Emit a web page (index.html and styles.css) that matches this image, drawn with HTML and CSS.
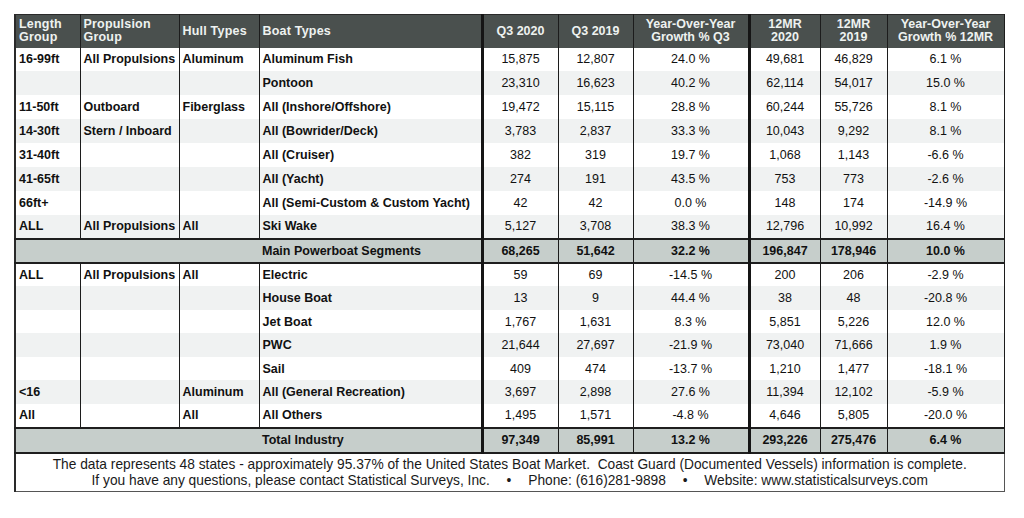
FILE: index.html
```html
<!DOCTYPE html>
<html>
<head>
<meta charset="utf-8">
<link rel="stylesheet" href="styles.css">
</head>
<body>
<div class="page">
<table class="sales">
  <colgroup>
    <col class="c-len"><col class="c-prop"><col class="c-hull"><col class="c-boat">
    <col class="c-q20"><col class="c-q19"><col class="c-gq">
    <col class="c-m20"><col class="c-m19"><col class="c-gm">
  </colgroup>
  <thead>
    <tr>
      <th class="txt">Length<br>Group</th>
      <th class="txt">Propulsion<br>Group</th>
      <th class="txt">Hull Types</th>
      <th class="txt sep">Boat Types</th>
      <th>Q3 2020</th>
      <th>Q3 2019</th>
      <th class="sep">Year-Over-Year<br>Growth % Q3</th>
      <th>12MR<br>2020</th>
      <th>12MR<br>2019</th>
      <th>Year-Over-Year<br>Growth % 12MR</th>
    </tr>
  </thead>
  <tbody class="power">
    <tr><td class="txt">16-99ft</td><td class="txt">All Propulsions</td><td class="txt">Aluminum</td><td class="txt sep">Aluminum Fish</td><td>15,875</td><td>12,807</td><td class="sep">24.0 %</td><td>49,681</td><td>46,829</td><td>6.1 %</td></tr>
    <tr class="alt"><td class="txt"></td><td class="txt"></td><td class="txt"></td><td class="txt sep">Pontoon</td><td>23,310</td><td>16,623</td><td class="sep">40.2 %</td><td>62,114</td><td>54,017</td><td>15.0 %</td></tr>
    <tr><td class="txt">11-50ft</td><td class="txt">Outboard</td><td class="txt">Fiberglass</td><td class="txt sep">All (Inshore/Offshore)</td><td>19,472</td><td>15,115</td><td class="sep">28.8 %</td><td>60,244</td><td>55,726</td><td>8.1 %</td></tr>
    <tr class="alt"><td class="txt">14-30ft</td><td class="txt">Stern / Inboard</td><td class="txt"></td><td class="txt sep">All (Bowrider/Deck)</td><td>3,783</td><td>2,837</td><td class="sep">33.3 %</td><td>10,043</td><td>9,292</td><td>8.1 %</td></tr>
    <tr><td class="txt">31-40ft</td><td class="txt"></td><td class="txt"></td><td class="txt sep">All (Cruiser)</td><td>382</td><td>319</td><td class="sep">19.7 %</td><td>1,068</td><td>1,143</td><td>-6.6 %</td></tr>
    <tr class="alt"><td class="txt">41-65ft</td><td class="txt"></td><td class="txt"></td><td class="txt sep">All (Yacht)</td><td>274</td><td>191</td><td class="sep">43.5 %</td><td>753</td><td>773</td><td>-2.6 %</td></tr>
    <tr><td class="txt">66ft+</td><td class="txt"></td><td class="txt"></td><td class="txt sep">All (Semi-Custom &amp; Custom Yacht)</td><td>42</td><td>42</td><td class="sep">0.0 %</td><td>148</td><td>174</td><td>-14.9 %</td></tr>
    <tr class="alt"><td class="txt">ALL</td><td class="txt">All Propulsions</td><td class="txt">All</td><td class="txt sep">Ski Wake</td><td>5,127</td><td>3,708</td><td class="sep">38.3 %</td><td>12,796</td><td>10,992</td><td>16.4 %</td></tr>
    <tr class="sum"><td class="txt blank"></td><td class="txt blank"></td><td class="txt blank"></td><td class="txt sep">Main Powerboat Segments</td><td>68,265</td><td>51,642</td><td class="sep">32.2 %</td><td>196,847</td><td>178,946</td><td>10.0 %</td></tr>
  </tbody>
  <tbody class="other">
    <tr><td class="txt">ALL</td><td class="txt">All Propulsions</td><td class="txt">All</td><td class="txt sep">Electric</td><td>59</td><td>69</td><td class="sep">-14.5 %</td><td>200</td><td>206</td><td>-2.9 %</td></tr>
    <tr class="alt"><td class="txt"></td><td class="txt"></td><td class="txt"></td><td class="txt sep">House Boat</td><td>13</td><td>9</td><td class="sep">44.4 %</td><td>38</td><td>48</td><td>-20.8 %</td></tr>
    <tr><td class="txt"></td><td class="txt"></td><td class="txt"></td><td class="txt sep">Jet Boat</td><td>1,767</td><td>1,631</td><td class="sep">8.3 %</td><td>5,851</td><td>5,226</td><td>12.0 %</td></tr>
    <tr class="alt"><td class="txt"></td><td class="txt"></td><td class="txt"></td><td class="txt sep">PWC</td><td>21,644</td><td>27,697</td><td class="sep">-21.9 %</td><td>73,040</td><td>71,666</td><td>1.9 %</td></tr>
    <tr><td class="txt"></td><td class="txt"></td><td class="txt"></td><td class="txt sep">Sail</td><td>409</td><td>474</td><td class="sep">-13.7 %</td><td>1,210</td><td>1,477</td><td>-18.1 %</td></tr>
    <tr class="alt"><td class="txt">&lt;16</td><td class="txt"></td><td class="txt">Aluminum</td><td class="txt sep">All (General Recreation)</td><td>3,697</td><td>2,898</td><td class="sep">27.6 %</td><td>11,394</td><td>12,102</td><td>-5.9 %</td></tr>
    <tr><td class="txt">All</td><td class="txt"></td><td class="txt">All</td><td class="txt sep">All Others</td><td>1,495</td><td>1,571</td><td class="sep">-4.8 %</td><td>4,646</td><td>5,805</td><td>-20.0 %</td></tr>
    <tr class="sum total"><td class="txt blank"></td><td class="txt blank"></td><td class="txt blank"></td><td class="txt sep">Total Industry</td><td>97,349</td><td>85,991</td><td class="sep">13.2 %</td><td>293,226</td><td>275,476</td><td>6.4 %</td></tr>
  </tbody>
  <tfoot>
    <tr>
      <td colspan="10" class="note">The data represents 48 states - approximately 95.37% of the United States Boat Market.&nbsp; Coast Guard (Documented Vessels) information is complete.<br>If you have any questions, please contact Statistical Surveys, Inc. <span class="dot">•</span> Phone: (616)281-9898 <span class="dot">•</span> Website: www.statisticalsurveys.com</td>
    </tr>
  </tfoot>
</table>
</div>
</body>
</html>
```

FILE: styles.css
```css
html, body {
  margin: 0;
  padding: 0;
  background: #ffffff;
}

.page {
  padding: 14px 0 0 14px;
}

.sales {
  width: 989px;
  table-layout: fixed;
  border-collapse: collapse;
  font-family: "Liberation Sans", Arial, sans-serif;
  color: #111111;
  border-left: 2px solid #2a2a2a;
  border-right: 1px solid #555;
}

.c-len { width: 65px; }
.c-prop { width: 99px; }
.c-hull { width: 80px; }
.c-boat { width: 223px; }
.c-q20 { width: 76px; }
.c-q19 { width: 75px; }
.c-gq { width: 116px; }
.c-m20 { width: 71px; }
.c-m19 { width: 67px; }
.c-gm { width: 117px; }

.sales th {
  background: #4a504e;
  color: #eef2f0;
  font-size: 12.5px;
  font-weight: bold;
  line-height: 13px;
  height: 33px;
  padding: 0 3px;
  text-align: center;
  border-right: 1px solid #1c1c1c;
  border-top: 1px solid #2a2a2a;
  box-sizing: border-box;
}

.sales th.txt {
  text-align: left;
  padding-left: 3px;
  letter-spacing: 0.2px;
}

.sales td {
  padding: 0 3px;
  font-size: 12.5px;
  text-align: center;
  border-right: 1px solid #1c1c1c;
  white-space: nowrap;
  box-sizing: border-box;
}

.sales .power td {
  height: 23.9px;
}

.sales .other td {
  height: 23.6px;
}

.sales td.txt {
  text-align: left;
  font-weight: bold;
  padding-left: 3px;
}

.sales .sep {
  border-right: 3px solid #151515;
}

.sales tr.alt td {
  background: #f0f2f2;
}

.sales tr.sum td {
  background: #c6cecb;
  font-weight: bold;
  border-top: 2px solid #1e1e1e;
  border-bottom: 2px solid #1e1e1e;
}

.sales tr.total td {
  height: 25px;
}

.sales tr.sum td.blank {
  border-right: none;
}

.sales td.note {
  background: #ffffff;
  font-size: 13.75px;
  font-weight: normal;
  line-height: 16px;
  height: 37px;
  padding: 3px 0 2px 0;
  text-align: center;
  border-right: none;
  border-bottom: 1px solid #555;
  color: #1a1a1a;
}

.dot {
  display: inline-block;
  margin: 0 13px;
}
```
